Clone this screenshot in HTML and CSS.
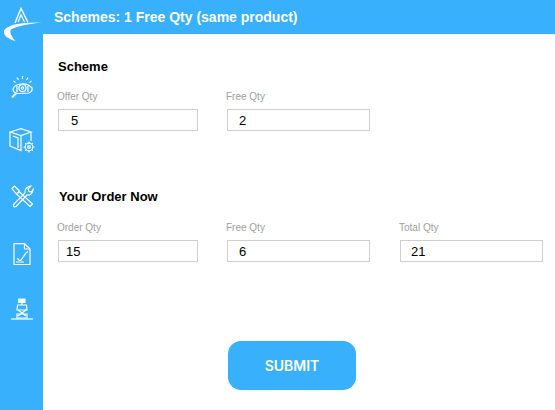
FILE: index.html
```html
<!DOCTYPE html>
<html lang="en">
<head>
  <meta charset="UTF-8">
  <meta name="viewport" content="width=device-width, initial-scale=1.0">
  <title>Schemes</title>
  <link rel="stylesheet" href="styles.css">
</head>
<body>
  <header class="topbar">
    <div class="logo">
      <svg width="43" height="42" viewBox="0 0 43 42" fill="none">
        <path d="M15 23 L21 8.500 L28 22.500" stroke="#fff" stroke-width="1.400"/>
        <path d="M18 22 L21 15 L24.500 22" stroke="#fff" stroke-width="1.200"/>
        <path d="M4 30.500 C7 25 20 22 42 22.500 C29 24 16 26 11 29.500 C9 33 12 37 15.500 41 C8 39 3 35.500 4 30.500 Z" fill="#fff"/>
      </svg>
    </div>
    <h1 class="title">Schemes: 1 Free Qty (same product)</h1>
  </header>

  <div class="layout">
    <nav class="sidebar">
      <svg class="nav-icon" width="24" height="22" viewBox="0 0 24 22" fill="none" stroke="#fff" stroke-width="1.200">
        <path d="M3 13 C5 7 17 6 22 12 C23 15 21 16 19 17 L9 17.500 C5 17.500 3 16 3 13 Z"/>
        <circle cx="12.500" cy="12" r="3.500"/>
        <circle cx="12.500" cy="12" r="1.200"/>
        <path d="M7 10 L7 16 M18 10 L18 16"/>
        <path d="M6.500 17 L2 21.500" stroke-width="2"/>
        <path d="M12.500 0 V3 M7 1.500 L8.500 4 M18 1.500 L16.500 4 M3.500 5 L5.500 6.500 M21.500 5 L19.500 6.500"/>
      </svg>
      <svg class="nav-icon" width="26" height="27" viewBox="0 0 26 27" fill="none" stroke="#fff" stroke-width="1.200">
        <path d="M1 4 L12 .7 L22 4 L12 7.500 Z"/>
        <path d="M1 4 V18 L12 22.500 V7.500"/>
        <path d="M22 4 V13"/>
        <path d="M4 8 L9 10 V20"/>
        <circle cx="20" cy="19" r="3.800"/>
        <circle cx="20" cy="19" r="1.300"/>
        <path d="M20 13.500 V15 M20 23 V24.500 M14.500 19 H16 M24 19 H25.500 M16.200 15.200 L17.200 16.200 M22.800 21.800 L23.800 22.800 M23.800 15.200 L22.800 16.200 M17.200 21.800 L16.200 22.800"/>
      </svg>
      <svg class="nav-icon" width="24" height="28" viewBox="0 0 24 28" fill="none" stroke="#fff" stroke-width="1.200">
        <path d="M2 3.500 L4.500 1 L9 5.500 C9 7.500 8 8.500 6 8.500 Z"/>
        <path d="M6 8.500 L20 21.500 L22.500 19 L8.500 6"/>
        <path d="M4 19 L15 8 C14.500 4.500 17 1 21 1 L18 4 L19 6.500 L21.500 7 L23 4.500 C23 8.500 20 10.500 17 10 L6 21.500 C4 22.500 2.500 20.500 4 19 Z"/>
      </svg>
      <svg class="nav-icon" width="18" height="25" viewBox="0 0 18 25" fill="none" stroke="#fff" stroke-width="1.200">
        <path d="M1 .7 H11.500 L17 6 V21.500 H1 Z"/>
        <path d="M11.500 .7 V6 H17"/>
        <path d="M3 19 H11 M4.500 15 C5.500 17.500 7 18 8 17 L13 10 L15 8.500"/>
      </svg>
      <svg class="nav-icon" width="22" height="22" viewBox="0 0 22 22" fill="none" stroke="#fff" stroke-width="1.100">
        <path d="M7.500 1 H14 V4.500 H7.500 Z" fill="#fff"/>
        <path d="M11 4.500 V7"/>
        <path d="M6.500 7 H15.500 L16 12 H6 Z"/>
        <path d="M7 12 L15 18 M15 12 L7 18"/>
        <path d="M6 16 H16 V20 H6 Z"/>
        <path d="M0 21 H22" stroke-width="1.200"/>
      </svg>
    </nav>

    <main class="content">
      <section class="scheme">
        <h2 class="section-title">Scheme</h2>
        <div class="fields">
          <div class="field">
            <label for="offer-qty">Offer Qty</label>
            <input id="offer-qty" class="pad-wide" type="text" value="5">
          </div>
          <div class="field">
            <label for="free-qty">Free Qty</label>
            <input id="free-qty" class="pad-mid" type="text" value="2">
          </div>
        </div>
      </section>

      <section class="order">
        <h2 class="section-title order-title">Your Order Now</h2>
        <div class="fields">
          <div class="field">
            <label for="order-qty">Order Qty</label>
            <input id="order-qty" type="text" value="15">
          </div>
          <div class="field">
            <label for="order-free">Free Qty</label>
            <input id="order-free" class="pad-mid" type="text" value="6">
          </div>
          <div class="field field-total">
            <label for="total-qty">Total Qty</label>
            <input id="total-qty" class="pad-total" type="text" value="21">
          </div>
        </div>
      </section>

      <div class="actions">
        <button type="button" class="submit-btn">SUBMIT</button>
      </div>
    </main>
  </div>
</body>
</html>
```

FILE: styles.css
```css
* {
  margin: 0;
  padding: 0;
  box-sizing: border-box;
}

body {
  font-family: 'Liberation Sans', Arial, sans-serif;
  background-color: #38b0fb;
  height: 100vh;
  overflow: hidden;
}

.topbar {
  display: flex;
  align-items: center;
  height: 34px;
  position: relative;
}

.logo {
  width: 43px;
  height: 34px;
  overflow: visible;
  flex-shrink: 0;
}

.title {
  margin-left: 11px;
  font-size: 14px;
  font-weight: bold;
  color: #ffffff;
}

.layout {
  display: flex;
  height: 376px;
}

.sidebar {
  width: 43px;
  flex-shrink: 0;
  display: flex;
  flex-direction: column;
  align-items: center;
  padding-top: 42px;
  gap: 30px;
}

.nav-icon {
  display: block;
  flex-shrink: 0;
}

.content {
  flex: 1;
  background-color: #ffffff;
  padding: 25px 11px 0 15px;
}

.section-title {
  font-size: 13px;
  font-weight: bold;
  color: #000000;
  line-height: 16px;
}

.order-title {
  margin-left: 1px;
}

.fields {
  display: grid;
  grid-template-columns: 140px 143px 144px;
  column-gap: 29px;
  margin-top: 16px;
}

.order .fields {
  margin-top: 17px;
}

.field label {
  display: block;
  font-size: 10px;
  line-height: 12px;
  color: #a0a0a0;
  margin-left: -1px;
  margin-bottom: 6px;
}

.field-total {
  margin-left: 1px;
}

.field input {
  display: block;
  width: 100%;
  height: 22px;
  border: 1px solid #cfcfcf;
  padding: 0 7px;
  font-family: 'Liberation Sans', Arial, sans-serif;
  font-size: 13px;
  color: #000000;
  outline: none;
}

.field input.pad-wide {
  padding-left: 12px;
}

.field input.pad-mid {
  padding-left: 11px;
}

.field input.pad-total {
  padding-left: 10px;
}

.order {
  margin-top: 58px;
}

.actions {
  display: flex;
  padding-left: 170px;
  margin-top: 79px;
}

.submit-btn {
  width: 128px;
  height: 49px;
  background-color: #38b0fb;
  color: #ffffff;
  border: none;
  border-radius: 13px;
  font-family: 'Inter', sans-serif;
  font-size: 14px;
  font-weight: 600;
  cursor: pointer;
}
```
